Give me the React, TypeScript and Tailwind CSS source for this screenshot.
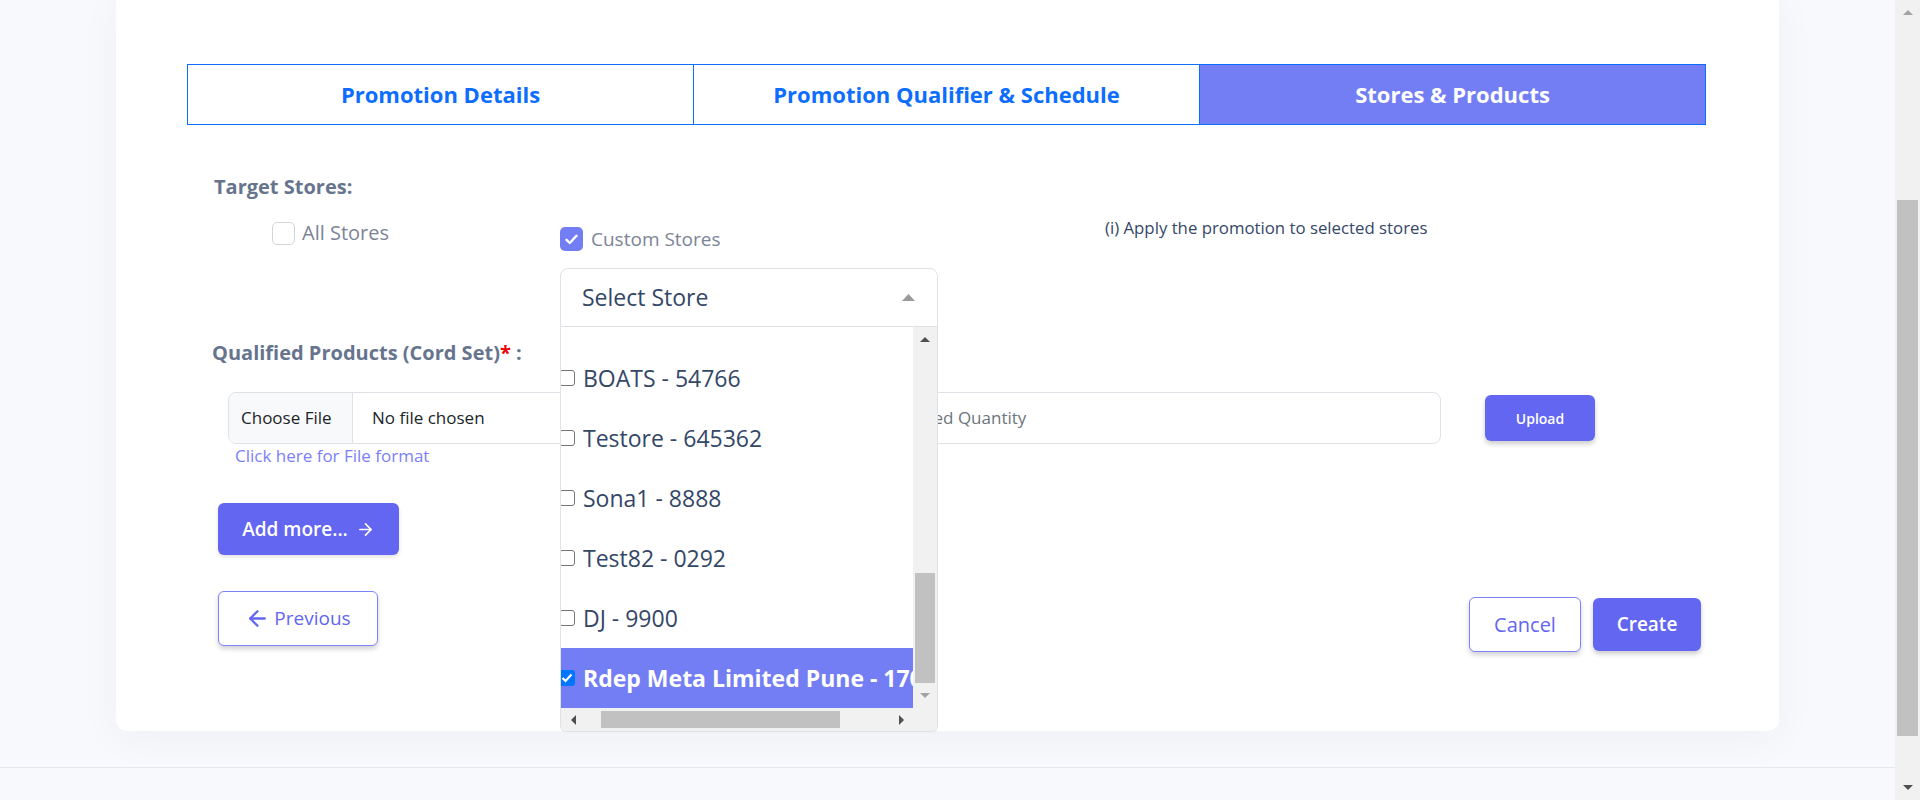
import { ArrowLeft, ArrowRight } from "lucide-react";

function Tri({ dir, color, w = 10, h = 6 }: { dir: "up" | "down" | "left" | "right"; color: string; w?: number; h?: number }) {
  let pts = "";
  if (dir === "up") pts = `0,${h} ${w},${h} ${w / 2},0`;
  if (dir === "down") pts = `0,0 ${w},0 ${w / 2},${h}`;
  const vw = dir === "left" || dir === "right" ? h : w;
  const vh = dir === "left" || dir === "right" ? w : h;
  if (dir === "left") pts = `${h},0 ${h},${w} 0,${w / 2}`;
  if (dir === "right") pts = `0,0 0,${w} ${h},${w / 2}`;
  return (
    <svg width={vw} height={vh} viewBox={`0 0 ${vw} ${vh}`}>
      <polygon points={pts} fill={color} />
    </svg>
  );
}

const stores = [
  { label: "BOATS - 54766", checked: false },
  { label: "Testore - 645362", checked: false },
  { label: "Sona1 - 8888", checked: false },
  { label: "Test82 - 0292", checked: false },
  { label: "DJ - 9900", checked: false },
  { label: "Rdep Meta Limited Pune - 170045", checked: true },
];

export default function App() {
  return (
    <div className="w-[1920px] h-[800px] overflow-hidden flex bg-[#f8f9fc] font-['Open_Sans',sans-serif]">
      <div className="w-[1895px] h-[800px] flex flex-col">
        <div className="h-[767px] px-[116px]">
          <div className="h-[731px] bg-white rounded-b-[12px] shadow-[0_6px_40px_rgba(40,50,110,0.05)] pt-[64px] pl-[71px] pr-[73px]">
            {/* Tabs */}
            <div className="flex h-[61px] border border-[#0d6efd]">
              <div className="flex-1 flex items-center justify-center text-[#0d6efd] font-bold text-[22px] border-r border-[#0d6efd]">
                Promotion Details
              </div>
              <div className="flex-1 flex items-center justify-center text-[#0d6efd] font-bold text-[22px] border-r border-[#0d6efd]">
                Promotion Qualifier &amp; Schedule
              </div>
              <div className="flex-1 flex items-center justify-center bg-[#737ef5] text-white font-bold text-[22px]">
                Stores &amp; Products
              </div>
            </div>

            {/* Target stores */}
            <div className="ml-[27px] mt-[50px] text-[20px] leading-[24px] font-bold text-[#67748e]">Target Stores:</div>

            <div className="flex items-start">
              <div className="w-[373px] pl-[85px] pt-[22px] flex items-center gap-[7px]">
                <span className="w-[23px] h-[23px] rounded-[5px] border border-[#d2d6da] bg-white" />
                <span className="text-[20px] leading-[24px] text-[#7b8496]">All Stores</span>
              </div>

              <div className="w-[378px] pt-[28px]">
                <div className="flex items-center gap-[8px]">
                  <span className="w-[23px] h-[24px] rounded-[5px] bg-[#737ef5] flex items-center justify-center">
                    <svg width="13" height="11" viewBox="0 0 13 11">
                      <path d="M1.5 5.8 L4.8 9 L11.5 1.8" stroke="white" strokeWidth="2.4" fill="none" strokeLinecap="round" strokeLinejoin="round" />
                    </svg>
                  </span>
                  <span className="text-[19px] leading-[24px] text-[#7b8496]">Custom Stores</span>
                </div>
                <div className="mt-[17px] relative">
                  <div className="h-[59px] border border-[#dee2e6] rounded-t-[8px] bg-white flex items-center justify-between pl-[21px] pr-[22px]">
                    <span className="text-[23px] text-[#344767]">Select Store</span>
                    <Tri dir="up" color="#9a9a9a" w={13} h={7} />
                  </div>
                  {/* open dropdown list */}
                  <div className="absolute top-full left-0 w-[378px] h-[405px] bg-white border-x border-b border-[#dee2e6] rounded-b-[6px] flex flex-col overflow-hidden z-10">
                    <div className="flex h-[381px]">
                      <div className="w-[352px] overflow-hidden pt-[21px]">
                        {stores.map((s) => (
                          <div
                            key={s.label}
                            className={
                              s.checked
                                ? "h-[60px] flex items-center gap-[8px] bg-[#737ef5] whitespace-nowrap"
                                : "h-[60px] flex items-center gap-[8px] whitespace-nowrap"
                            }
                          >
                            {s.checked ? (
                              <span className="-ml-[2px] shrink-0 w-[16px] h-[16px] rounded-[3px] bg-[#0075ff] flex items-center justify-center">
                                <svg width="12" height="10" viewBox="0 0 12 10">
                                  <path d="M1.5 5 L4.5 8 L10.5 1.5" stroke="white" strokeWidth="2.2" fill="none" />
                                </svg>
                              </span>
                            ) : (
                              <span className="-ml-[2px] shrink-0 w-[16px] h-[16px] rounded-[3px] border border-[#767676] bg-white" />
                            )}
                            <span
                              className={
                                s.checked
                                  ? "text-[23px] font-bold text-white"
                                  : "text-[23px] text-[#344767]"
                              }
                            >
                              {s.label}
                            </span>
                          </div>
                        ))}
                      </div>
                      <div className="w-[24px] bg-[#f1f1f1] flex flex-col">
                        <div className="h-[24px] flex items-center justify-center">
                          <Tri dir="up" color="#505050" w={10} h={5} />
                        </div>
                        <div className="mt-[222px] mx-[2px] h-[110px] bg-[#c1c1c1]" />
                        <div className="h-[25px] flex items-center justify-center">
                          <Tri dir="down" color="#a3a3a3" w={10} h={5} />
                        </div>
                      </div>
                    </div>
                    <div className="flex h-[23px]">
                      <div className="w-[352px] bg-[#f1f1f1] flex items-center">
                        <div className="w-[24px] flex items-center justify-center">
                          <Tri dir="left" color="#505050" w={10} h={5} />
                        </div>
                        <div className="ml-[16px] w-[239px] h-[17px] bg-[#c1c1c1]" />
                        <div className="ml-auto w-[24px] flex items-center justify-center">
                          <Tri dir="right" color="#505050" w={10} h={5} />
                        </div>
                      </div>
                      <div className="w-[24px] bg-[#f1f1f1]" />
                    </div>
                  </div>
                </div>
              </div>

              <div className="ml-[167px] pt-[17px] text-[16.8px] leading-[24px] text-[#344767] whitespace-nowrap">
                (i) Apply the promotion to selected stores
              </div>
            </div>

            {/* Qualified products */}
            <div className="ml-[25px] mt-[14px] text-[20px] leading-[24px] font-bold text-[#67748e]">
              Qualified Products (Cord Set)<span className="text-[#ea0606]">*</span> :
            </div>

            <div className="mt-[27px] ml-[41px] flex items-center">
              <div className="w-[582px] h-[52px] border border-[#dee2e6] rounded-[8px] flex overflow-hidden">
                <div className="w-[124px] bg-[#f8f9fa] border-r border-[#dee2e6] flex items-center pl-[12px] text-[17px] text-[#212529]">
                  Choose File
                </div>
                <div className="flex items-center pl-[19px] text-[17px] text-[#212529]">No file chosen</div>
              </div>
              <div className="ml-[8px] w-[623px] h-[52px] border border-[#dee2e6] rounded-[8px] flex items-center pl-[16px] text-[17px] text-[#6c757d] whitespace-nowrap">
                Enter Qualified Quantity
              </div>
              <button className="ml-[44px] w-[110px] h-[46px] rounded-[6px] bg-[#6366f1] text-white text-[14px] font-semibold shadow-[0_3px_5px_rgba(0,0,0,0.2)]">
                Upload
              </button>
            </div>

            <div className="ml-[48px] mt-[2px] text-[17px] leading-[20px] text-[#7c7ff9]">Click here for File format</div>

            <button className="ml-[31px] mt-[37px] w-[181px] h-[52px] rounded-[6px] bg-[#6366f1] text-white text-[19px] font-semibold flex items-center justify-center gap-[8px] shadow-[0_2px_4px_rgba(0,0,0,0.12)]">
              Add more...
              <ArrowRight size={19} strokeWidth={2.2} />
            </button>

            <div className="mt-[36px] pl-[31px] pr-[5px] flex justify-between items-start">
              <button className="w-[160px] h-[55px] border border-[#7c83fd] rounded-[6px] bg-white text-[#6366f1] text-[19px] flex items-center justify-center gap-[4px] shadow-[0_3px_5px_rgba(0,0,0,0.18)]">
                <ArrowLeft size={25} strokeWidth={2.2} />
                Previous
              </button>
              <div className="pt-[6px] flex gap-[12px] items-start">
                <button className="w-[112px] h-[55px] border border-[#7c83fd] rounded-[6px] bg-white text-[#6366f1] text-[20px] shadow-[0_3px_5px_rgba(0,0,0,0.18)]">
                  Cancel
                </button>
                <button className="mt-[1px] w-[108px] h-[53px] rounded-[6px] bg-[#6366f1] text-white text-[19px] font-semibold shadow-[0_3px_5px_rgba(0,0,0,0.2)]">
                  Create
                </button>
              </div>
            </div>
          </div>
        </div>
        <div className="flex-1 border-t border-[#e4e7ee] bg-[#f8f9fc]" />
      </div>

      {/* page scrollbar */}
      <div className="w-[25px] h-[800px] bg-[#f1f1f1] flex flex-col">
        <div className="h-[25px] flex items-center justify-center">
          <Tri dir="up" color="#a3a3a3" w={10} h={5} />
        </div>
        <div className="mt-[175px] mx-[2px] h-[536px] bg-[#c1c1c1]" />
        <div className="mt-auto h-[25px] flex items-center justify-center">
          <Tri dir="down" color="#505050" w={10} h={5} />
        </div>
      </div>
    </div>
  );
}
